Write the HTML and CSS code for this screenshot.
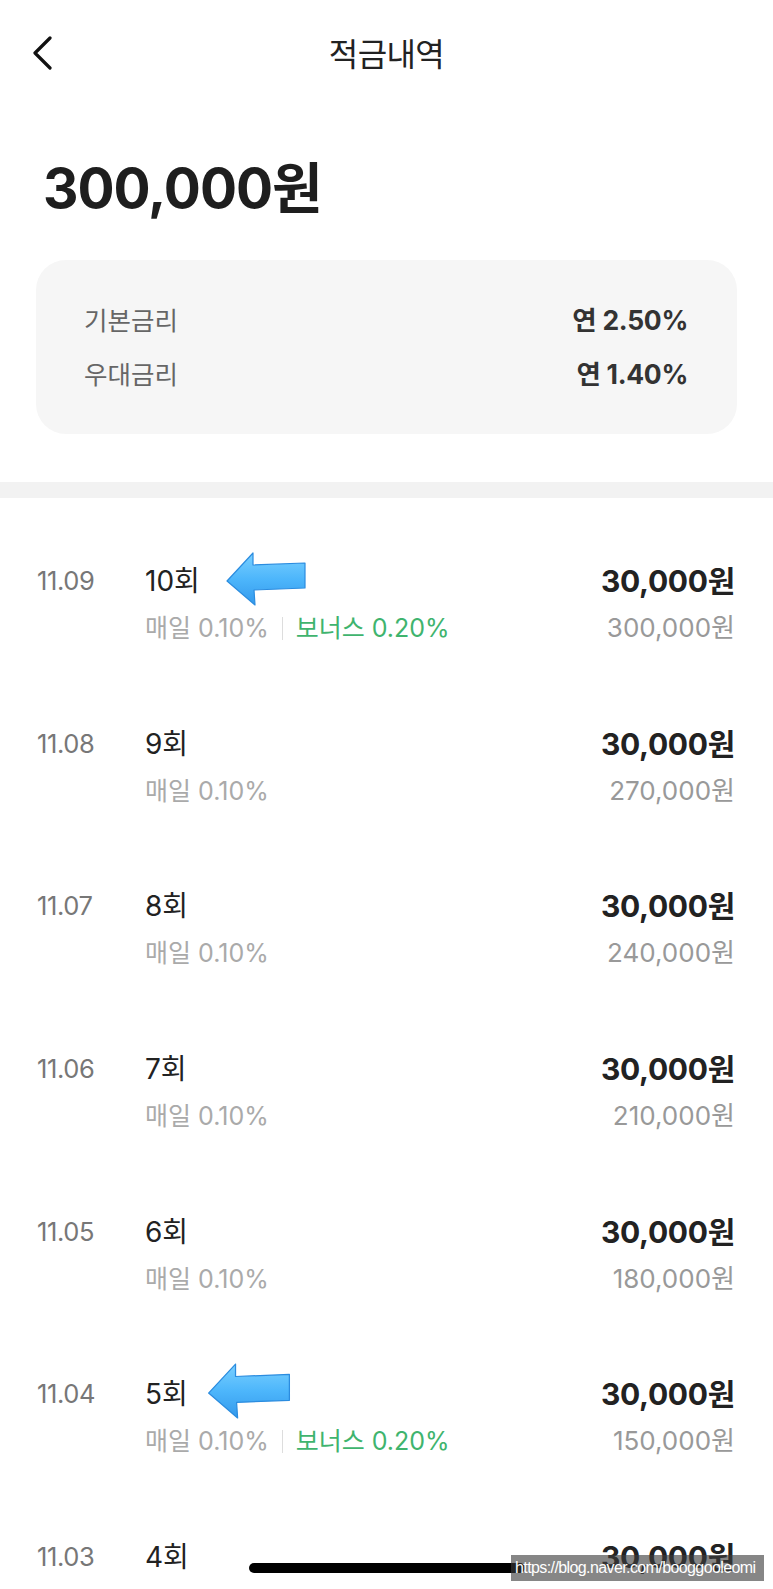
FILE: index.html
```html
<!DOCTYPE html>
<html lang="ko">
<head>
    <meta charset="UTF-8">
    <meta name="viewport" content="width=device-width, initial-scale=1.0">
    <title>적금내역</title>
    <link rel="stylesheet" href="styles.css">
</head>
<body>
<div class="screen">
    <header class="topbar">
        <button class="back" aria-label="뒤로">
            <svg width="22" height="34" viewBox="0 0 22 34"><path d="M19 2 L4 17 L19 32" fill="none" stroke="#111" stroke-width="3.2" stroke-linecap="round" stroke-linejoin="round"/></svg>
        </button>
        <h1 class="title">적금내역</h1>
    </header>

    <section class="summary">
        <div class="total">300,000원</div>
        <div class="rates">
            <div class="rate-row"><span>기본금리</span><strong>연 2.50%</strong></div>
            <div class="rate-row"><span>우대금리</span><strong>연 1.40%</strong></div>
        </div>
    </section>

    <div class="divider"></div>

    <ul class="history">
        <li class="item">
            <span class="date">11.09</span>
            <div class="info">
                <div class="round">10회</div>
                <div class="rate">매일 0.10%<i class="sep"></i><span class="bonus">보너스 0.20%</span></div>
            </div>
            <div class="amounts">
                <div class="amount">30,000원</div>
                <div class="sum">300,000원</div>
            </div>
            <svg class="arrow arrow-1" viewBox="0 0 82 56">
                <defs>
                    <linearGradient id="ag1" x1="0" y1="0" x2="0" y2="1">
                        <stop offset="0" stop-color="#7ad0ff"/>
                        <stop offset="0.5" stop-color="#4db6fb"/>
                        <stop offset="1" stop-color="#3399ec"/>
                    </linearGradient>
                </defs>
                <polygon points="2,30 28,2 28,14 80,12 80,37 29,39 30,54" fill="url(#ag1)" stroke="#2b8cdf" stroke-width="1.2" stroke-linejoin="round"/>
            </svg>
        </li>
        <li class="item">
            <span class="date">11.08</span>
            <div class="info">
                <div class="round">9회</div>
                <div class="rate">매일 0.10%</div>
            </div>
            <div class="amounts">
                <div class="amount">30,000원</div>
                <div class="sum">270,000원</div>
            </div>
        </li>
        <li class="item">
            <span class="date">11.07</span>
            <div class="info">
                <div class="round">8회</div>
                <div class="rate">매일 0.10%</div>
            </div>
            <div class="amounts">
                <div class="amount">30,000원</div>
                <div class="sum">240,000원</div>
            </div>
        </li>
        <li class="item">
            <span class="date">11.06</span>
            <div class="info">
                <div class="round">7회</div>
                <div class="rate">매일 0.10%</div>
            </div>
            <div class="amounts">
                <div class="amount">30,000원</div>
                <div class="sum">210,000원</div>
            </div>
        </li>
        <li class="item">
            <span class="date">11.05</span>
            <div class="info">
                <div class="round">6회</div>
                <div class="rate">매일 0.10%</div>
            </div>
            <div class="amounts">
                <div class="amount">30,000원</div>
                <div class="sum">180,000원</div>
            </div>
        </li>
        <li class="item">
            <span class="date">11.04</span>
            <div class="info">
                <div class="round">5회</div>
                <div class="rate">매일 0.10%<i class="sep"></i><span class="bonus">보너스 0.20%</span></div>
            </div>
            <div class="amounts">
                <div class="amount">30,000원</div>
                <div class="sum">150,000원</div>
            </div>
            <svg class="arrow arrow-2" viewBox="0 0 82 56">
                <defs>
                    <linearGradient id="ag2" x1="0" y1="0" x2="0" y2="1">
                        <stop offset="0" stop-color="#7ad0ff"/>
                        <stop offset="0.5" stop-color="#4db6fb"/>
                        <stop offset="1" stop-color="#3399ec"/>
                    </linearGradient>
                </defs>
                <polygon points="2,30 28,2 28,14 80,12 80,37 29,39 30,54" fill="url(#ag2)" stroke="#2b8cdf" stroke-width="1.2" stroke-linejoin="round"/>
            </svg>
        </li>
        <li class="item">
            <span class="date">11.03</span>
            <div class="info">
                <div class="round">4회</div>
                <div class="rate">매일 0.10%</div>
            </div>
            <div class="amounts">
                <div class="amount">30,000원</div>
                <div class="sum">120,000원</div>
            </div>
        </li>
    </ul>

    <div class="home-bar"></div>
    <div class="watermark">https://blog.naver.com/booggooleomi</div>
</div>
</body>
</html>
```

FILE: styles.css
```css
* { box-sizing: border-box; }
body { margin: 0; background: #fff; font-family: Inter, "Noto Sans CJK KR", sans-serif; color: #222; }
.screen { position: relative; width: 773px; height: 1589px; overflow: hidden; }

.topbar { position: relative; height: 104px; display: flex; align-items: center; justify-content: center; }
.back { position: absolute; left: 31px; top: 36px; padding: 0; border: none; background: none; }
.back svg { display: block; }
.title { margin: 0; font-family: "Noto Sans CJK KR", sans-serif; font-size: 32px; font-weight: 400; color: #222; letter-spacing: -0.6px; }

.summary { padding: 53px 36px 0; }
.total { margin-left: 7px; font-size: 55px; font-weight: 700; line-height: 62px; letter-spacing: -1px; color: #1e1e1e; }
.rates { margin-top: 41px; height: 174px; padding: 31px 49px 0 48px; border-radius: 30px; background: #f6f6f6; }
.rate-row { display: flex; justify-content: space-between; align-items: center; height: 54px; }
.rate-row span { font-family: "Noto Sans CJK KR", sans-serif; font-size: 25.5px; color: #666; }
.rate-row strong { font-size: 26.5px; font-weight: 700; color: #333; letter-spacing: -0.3px; }

.divider { margin-top: 48px; height: 16px; background: #f2f2f2; }

.history { list-style: none; margin: 0; padding: 65px 0 0; }
.item { position: relative; display: flex; height: 162.67px; padding: 0 38px 0 37px; }
.date { width: 108px; font-size: 25.5px; line-height: 36px; color: #777; letter-spacing: -0.4px; }
.info { flex: 1; }
.round { font-size: 28px; line-height: 36px; color: #222; }
.rate { display: flex; align-items: center; margin-top: 11px; font-size: 25px; line-height: 36px; color: #aaa; }
.sep { display: inline-block; width: 1px; height: 23px; margin: 0 13px; background: #ddd; }
.bonus { color: #3fb46e; }
.amounts { text-align: right; }
.amount { font-size: 30px; font-weight: 700; line-height: 36px; color: #222; letter-spacing: -0.3px; }
.sum { margin-top: 11px; font-size: 26px; line-height: 36px; color: #999; }

.arrow { position: absolute; }
.arrow-1 { left: 225px; top: -12px; width: 82px; height: 56px; }
.arrow-2 { left: 205px; top: -14px; width: 88px; height: 58px; }

.home-bar { position: absolute; left: 249px; top: 1563px; width: 276px; height: 10px; border-radius: 5px; background: #000; }
.watermark { position: absolute; left: 511px; top: 1555px; width: 253px; height: 26px; padding-left: 4px; background: rgba(60, 60, 60, 0.62); color: #fff; font-family: "Liberation Sans", sans-serif; font-size: 16px; line-height: 26px; letter-spacing: -0.6px; white-space: nowrap; overflow: hidden; }
```
